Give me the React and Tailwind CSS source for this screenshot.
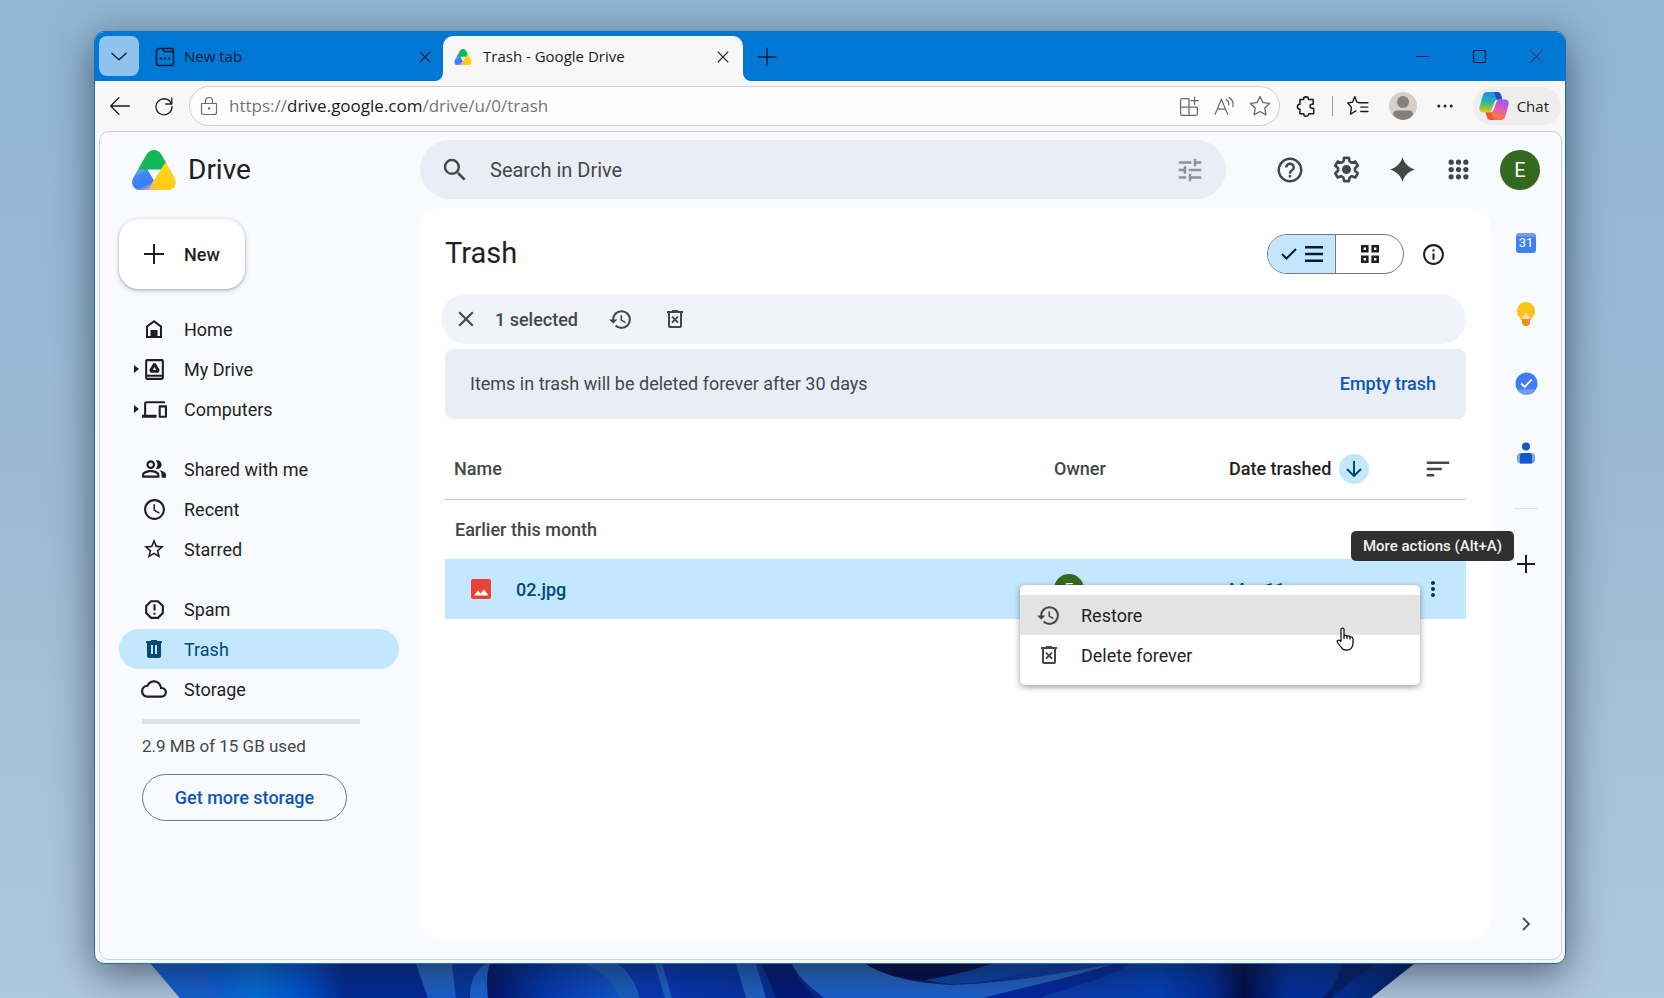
import { useState } from 'react';
import {
    MdAccessTime, MdClose, MdCloudQueue, MdHelpOutline, MdInfoOutline, MdMoreVert,
    MdOutlinePeopleAlt, MdRestore, MdSearch, MdSort, MdStarBorder, MdTune,
} from 'react-icons/md';

const DriveLogo = ({ className, id }) => (
    <svg viewBox="0 0 44 40" className={className} aria-hidden="true">
        <defs>
            <clipPath id={`${id}-clip`}>
                <path d="M14.6 4.6C16.3 1.6 18.8 0 22 0s5.700 1.600 7.400 4.600L42.600 27.500C46.200 33.800 42 40 35.800 40H8.200C2 40-2.200 33.800 1.400 27.500Z" />
            </clipPath>
            <linearGradient id={`${id}-blue`} x1="0.2" y1="0" x2="0.7" y2="1">
                <stop offset="0" stopColor="#6fb7ec" />
                <stop offset="0.3" stopColor="#3f86f7" />
                <stop offset="0.75" stopColor="#3b7df5" />
                <stop offset="1" stopColor="#b9a8e8" />
            </linearGradient>
            <linearGradient id={`${id}-yellow`} x1="0" y1="1" x2="0.8" y2="0.2">
                <stop offset="0" stopColor="#fdb45a" />
                <stop offset="0.35" stopColor="#ffcb14" />
                <stop offset="1" stopColor="#fdd51c" />
            </linearGradient>
        </defs>
        <g clipPath={`url(#${id}-clip)`}>
            <path d="M0 0H44V4L28.700 20H0Z" fill="#12b75b" />
            <path d="M0 19.500H15.500L22 30L17 40H0Z" fill={`url(#${id}-blue)`} />
            <path d="M33.500 12.500L28.700 19.500L22 30L16.500 40H44V12Z" fill={`url(#${id}-yellow)`} />
            <path d="M15.500 19.500H28.700L22 30.200Z" fill="#f8fafd" />
        </g>
    </svg>
);

const CopilotLogo = () => (
    <svg viewBox="0 0 30 28" className="w-[30px] h-7" aria-hidden="true">
        <defs>
            <linearGradient id="cp-a" x1="0.4" y1="0" x2="0.3" y2="1">
                <stop offset="0" stopColor="#1d8ff0" />
                <stop offset="0.45" stopColor="#22b4b4" />
                <stop offset="0.75" stopColor="#86c440" />
                <stop offset="1" stopColor="#f2c51d" />
            </linearGradient>
            <linearGradient id="cp-b" x1="0.7" y1="0" x2="0.3" y2="1">
                <stop offset="0" stopColor="#9b59e8" />
                <stop offset="0.45" stopColor="#e85ab5" />
                <stop offset="0.8" stopColor="#fb7a4a" />
                <stop offset="1" stopColor="#f9603a" />
            </linearGradient>
        </defs>
        <path d="M8 0H18C20 0 21.500 1.300 22 3L23.300 7.500H19C17 7.500 16 8.500 15.300 10.500L12.600 18C12 19.700 11 20.500 9 20.500H4C1.200 20.500-.3 18 .5 15L3.600 4C4.400 1.300 5.700 0 8 0Z" fill="url(#cp-a)" />
        <path d="M15 0H18C20 0 21.500 1.300 22 3L23.300 7.500H17.500Z" fill="#1f4bd0" />
        <path d="M22 28H12C10 28 8.500 26.700 8 25L6.700 20.500H11C13 20.500 14 19.500 14.700 17.500L17.400 10C18 8.300 19 7.500 21 7.500H26C28.800 7.500 30.300 10 29.500 13L26.400 24C25.600 26.700 24.300 28 22 28Z" fill="url(#cp-b)" />
        <path d="M15 28H12C10 28 8.500 26.700 8 25L6.700 20.500H12.500Z" fill="#f0552b" />
    </svg>
);

const Thin = ({ children, className = 'size-5', width = 1.2 }) => (
    <svg viewBox="0 0 20 20" className={className} fill="none" stroke="currentColor" strokeWidth={width} strokeLinecap="round" strokeLinejoin="round" aria-hidden="true">
        {children}
    </svg>
);

const Solid = ({ children, className = 'size-6' }) => (
    <svg viewBox="0 0 24 24" className={className} fill="currentColor" fillRule="evenodd" aria-hidden="true">
        {children}
    </svg>
);

const HomeIcon = () => <Solid><path d="M12 3L4 9v12h16V9L12 3zm6 16h-2.500v-6h-7v6H6v-9l6-4.500L18 10v9z" /><path d="M9 13h6v7H9z" /></Solid>;
const MyDriveIcon = () => (
    <Solid className="size-[25px]">
        <path d="M19 2H5a2 2 0 0 0-2 2v16a2 2 0 0 0 2 2h14a2 2 0 0 0 2-2V4a2 2 0 0 0-2-2zm0 18H5v-1h14v1zm0-3H5V4h14v13z" />
        <path d="M13.200 6h-2.400L7 12.500 8.200 15h7.600l1.200-2.500L13.200 6zm-2.800 6.500L12 9.700l1.600 2.800h-3.200z" />
    </Solid>
);
const ComputersIcon = () => <Solid className="size-[25px]"><path d="M4 6h18V4H4a2 2 0 0 0-2 2v11H0v3h14v-3H4V6zm19 2h-6a1 1 0 0 0-1 1v10a1 1 0 0 0 1 1h6a1 1 0 0 0 1-1V9a1 1 0 0 0-1-1zm-1 10h-4v-8h4v8z" /></Solid>;
const SpamIcon = () => <Solid className="size-[25px]"><path d="M15.730 3H8.270L3 8.270v7.460L8.270 21h7.460L21 15.730V8.270L15.730 3zM19 14.900L14.900 19H9.100L5 14.900V9.100L9.100 5h5.800L19 9.100v5.800zM11 7h2v6h-2zM11 15h2v2h-2z" /></Solid>;
const TrashIcon = () => <Solid><path d="M15 4V3H9v1H4v2h1v13c0 1.100.9 2 2 2h10c1.100 0 2-.9 2-2V6h1V4h-5zM9 8h2v9H9V8zm4 0h2v9h-2V8z" /></Solid>;
const DeleteForeverIcon = () => (
    <Solid>
        <path d="M15 4V3H9v1H4v2h1v13c0 1.100.9 2 2 2h10c1.100 0 2-.9 2-2V6h1V4h-5zm2 15H7V6h10v13z" />
        <path d="M9.600 16.300L12 13.900l2.400 2.400 1.300-1.300-2.400-2.400 2.400-2.400-1.300-1.300L12 11.300 9.600 8.900l-1.300 1.300 2.400 2.400L8.300 15z" />
    </Solid>
);
const GearIcon = () => (
    <svg viewBox="0 0 24 24" className="size-[31px]" aria-hidden="true">
        <path fill="none" stroke="currentColor" strokeWidth="2" strokeLinejoin="round" d="M10.100 3h3.800l.5 2.800 1.700 1 2.700-1 1.900 3.300-2.200 1.900v2l2.200 1.900-1.900 3.300-2.700-1-1.700 1-.5 2.800h-3.800l-.5-2.800-1.700-1-2.700 1-1.900-3.300 2.200-1.900v-2L3.300 9.100l1.900-3.300 2.700 1 1.700-1z" />
        <circle cx="12" cy="12" r="3.500" fill="currentColor" />
    </svg>
);

const NAV = [
    [
        { label: 'Home', icon: <HomeIcon /> },
        { label: 'My Drive', icon: <MyDriveIcon />, expandable: true },
        { label: 'Computers', icon: <ComputersIcon />, expandable: true },
    ],
    [
        { label: 'Shared with me', icon: <MdOutlinePeopleAlt className="size-[26px]" /> },
        { label: 'Recent', icon: <MdAccessTime className="size-[25px]" /> },
        { label: 'Starred', icon: <MdStarBorder className="size-6" /> },
    ],
    [
        { label: 'Spam', icon: <SpamIcon /> },
        { label: 'Trash', icon: <TrashIcon /> },
        { label: 'Storage', icon: <MdCloudQueue className="size-[26px]" /> },
    ],
];

function Wallpaper() {
    return (
        <svg viewBox="0 0 1664 60" preserveAspectRatio="none" className="absolute inset-x-0 bottom-0 w-full h-[60px]" aria-hidden="true">
            <defs>
                <linearGradient id="bloom" gradientUnits="userSpaceOnUse" x1="150" y1="0" x2="1414" y2="0">
                    <stop offset="0" stopColor="#1a62d0" />
                    <stop offset="0.05" stopColor="#0b5fd8" />
                    <stop offset="0.085" stopColor="#0570dc" />
                    <stop offset="0.12" stopColor="#0054d4" />
                    <stop offset="0.155" stopColor="#002a98" />
                    <stop offset="0.21" stopColor="#022a98" />
                    <stop offset="0.25" stopColor="#0638a8" />
                    <stop offset="0.4" stopColor="#0538b8" />
                    <stop offset="0.52" stopColor="#052c94" />
                    <stop offset="0.58" stopColor="#021058" />
                    <stop offset="0.7" stopColor="#0a3aa8" />
                    <stop offset="0.8" stopColor="#0340b8" />
                    <stop offset="0.84" stopColor="#022c98" />
                    <stop offset="0.865" stopColor="#010c48" />
                    <stop offset="0.9" stopColor="#0230a0" />
                    <stop offset="0.94" stopColor="#013098" />
                    <stop offset="1" stopColor="#011e68" />
                </linearGradient>
                <linearGradient id="petal" x1="0" y1="0" x2="1" y2="0">
                    <stop offset="0" stopColor="#020850" />
                    <stop offset="0.5" stopColor="#0438b0" />
                    <stop offset="1" stopColor="#1058d0" />
                </linearGradient>
                <linearGradient id="sheen" x1="0" y1="0" x2="0" y2="1">
                    <stop offset="0" stopColor="#2a6cbc" />
                    <stop offset="1" stopColor="#1a5fd2" />
                </linearGradient>
            </defs>
            <path d="M131 0H1440L1414 26L1371 60H180L151 26Z" fill="url(#bloom)" />
            <path d="M151 26L180 60H224L192 26Z" fill="#1560d0" />
            <path d="M416 26H452L456 60H428Z" fill="url(#sheen)" />
            <path d="M470 60C470 44 474 32 486 26H585C605 34 614 48 620 60Z" fill="url(#petal)" />
            <path d="M470 60C470 44 474 32 486 26H490C486 36 487 48 488 60Z" fill="#1d66d4" />
            <path d="M585 26C605 34 614 48 620 60H640C636 44 628 33 618 26Z" fill="#1b60c0" />
            <path d="M618 26C628 33 636 44 640 60H656C652 44 650 34 646 26Z" fill="#0838b4" />
            <path d="M655 26H662L672 60H665Z" fill="#1d62cc" />
            <path d="M736 26H756L766 60H746Z" fill="#2062c4" />
            <path d="M762 26H792C800 44 808 52 816 60H776Z" fill="#021878" />
            <path d="M792 26H866C880 34 900 44 950 47C1000 46 1060 36 1112 26H1130C1070 40 1020 50 984 60H824C812 50 800 42 792 26Z" fill="url(#sheen)" />
            <path d="M866 26H998C984 36 970 42 948 43C910 44 880 36 866 26Z" fill="#020b48" />
            <path d="M924 42C950 38 974 32 990 26H1050C1020 38 984 46 950 46Z" fill="#0a44a8" />
            <path d="M984 60C1020 50 1070 40 1112 26H1130C1110 40 1060 52 1040 60Z" fill="#0428a0" />
            <path d="M1342 26H1376C1356 40 1344 50 1330 60H1322C1334 50 1338 40 1342 26Z" fill="#03206c" />
        </svg>
    );
}

function TitleBar() {
    return (
        <div className="flex h-[49px] bg-[#0078d4] pl-1 text-[#0b1a36]">
            <button aria-label="Tab actions" className="mt-1 flex size-10 items-center justify-center rounded-lg bg-[#8fc3ee]">
                <Thin className="size-[22px]"><path d="M3.500 7.500L10 13.500L16.500 7.500" /></Thin>
            </button>
            <div className="flex w-[304px] items-center pl-4 pr-2.5 text-[15px]">
                <Thin className="size-[20px]" width={1.5}>
                    <path d="M1.500 4a2.500 2.500 0 0 1 2.500-2.500h3.500L9 4.500h7a2.500 2.500 0 0 1 2.500 2.500v9a2.500 2.500 0 0 1-2.500 2.500H4A2.500 2.500 0 0 1 1.500 16zM8 1.500h8a2.500 2.500 0 0 1 2.500 2.500v3" />
                    <path d="M5.500 11.500h.8M9.600 11.500h.8M13.700 11.500h.8" strokeWidth="1.800" />
                </Thin>
                <span className="ml-[9px] flex-1">New tab</span>
                <button aria-label="Close New tab"><Thin className="size-4" width={1.5}><path d="M4 4l12 12M16 4L4 16" /></Thin></button>
            </div>
            <div className="relative mt-1 flex w-[300px] items-center rounded-t-[10px] bg-[#f7f7f7] pb-1 pl-[11px] pr-3 text-[15px] text-[#1b1b1b]">
                <svg viewBox="0 0 8 8" className="absolute -left-2 bottom-0 size-2" aria-hidden="true"><path d="M8 0V8H0A8 8 0 0 0 8 0" fill="#f7f7f7" /></svg>
                <svg viewBox="0 0 8 8" className="absolute -right-2 bottom-0 size-2" aria-hidden="true"><path d="M0 0V8H8A8 8 0 0 1 0 0" fill="#f7f7f7" /></svg>
                <DriveLogo className="h-4 w-[18px]" id="fav" />
                <span className="ml-[11px] flex-1">Trash - Google Drive</span>
                <button aria-label="Close Trash tab"><Thin className="size-4" width={1.5}><path d="M4 4l12 12M16 4L4 16" /></Thin></button>
            </div>
            <button aria-label="New tab" className="flex w-12 items-center justify-center">
                <Thin className="size-[22px]"><path d="M10 2v16M2 10h16" /></Thin>
            </button>
            <div className="flex-1" />
            <button aria-label="Minimize" className="flex w-[57px] items-center justify-center"><Thin className="size-[15px]"><path d="M2 10h16" /></Thin></button>
            <button aria-label="Maximize" className="flex w-[57px] items-center justify-center"><Thin className="size-[15px]" width={1.6}><rect x="2" y="2" width="16" height="16" rx="1.500" /></Thin></button>
            <button aria-label="Close" className="flex w-[57px] items-center justify-center"><Thin className="size-[15px]"><path d="M2 2l16 16M18 2L2 18" /></Thin></button>
        </div>
    );
}

function Toolbar() {
    return (
        <div className="flex h-[50px] items-center bg-[#f7f7f7] pl-0.5 pr-1 text-[#1f1f1f]">
            <button aria-label="Back" className="flex w-[45px] justify-center"><Thin className="size-[22px]"><path d="M18.500 10h-17M9 2.500L1.500 10L9 17.500" /></Thin></button>
            <button aria-label="Refresh" className="flex w-11 justify-center"><Thin className="size-5" width={1.3}><path d="M17.500 8A8 8 0 1 0 18 10.500M17.800 2v6h-6" /></Thin></button>
            <label className="ml-[3px] flex h-10 flex-1 items-center rounded-full border border-[#d0d0d0] bg-[#fdfdfd] pl-[9px] pr-2 text-[#6b6b6b]">
                <Thin className="size-5"><path d="M2.500 7.500h15v9a2 2 0 0 1-2 2h-11a2 2 0 0 1-2-2zM6.500 7.500V5a3.500 3.500 0 0 1 7 0v2.500" /><circle cx="10" cy="12.500" r="0.600" fill="currentColor" /></Thin>
                <span className="ml-2.5 flex-1 text-[17px] text-[#767676]">https://<span className="text-[#1b1b1b]">drive.google.com</span>/drive/u/0/trash</span>
                <span className="flex items-center gap-[14px]">
                    <Thin className="size-[21px]"><path d="M9 2.500H3a1.500 1.500 0 0 0-1.500 1.500v13A1.500 1.500 0 0 0 3 18.500h13a1.500 1.500 0 0 0 1.500-1.500v-6.500h-16M9.500 2.500v16M14.800 1v7M11.300 4.500h7" /></Thin>
                    <Thin className="size-[21px]"><path d="M1 17.500L7 3l6 14.500M3 12.500h8M11.500 3.500q3 1.500 2.500 5M14.500 1.500q4.500 2.500 3.500 8.500" /></Thin>
                    <Thin className="size-[22px]"><path d="M10 1.300l2.700 5.600 6.100.8-4.500 4.200 1.100 6.100L10 15l-5.400 3 1.100-6.100L1.200 7.700l6.100-.8z" /></Thin>
                </span>
            </label>
            <button aria-label="Extensions" className="flex w-[52px] justify-center">
                <Thin className="size-[22px]" width={1.4}><path d="M4.500 4h3.200a2.300 2.300 0 0 1 4.600 0h4.200v4.500h-1a1.800 1.800 0 0 0 0 3.600h1.500V17h-4.500a2.300 2.300 0 0 1-4.600 0H4.500v-4a2.300 2.300 0 0 1 0-4.600z" /></Thin>
            </button>
            <span className="h-5 w-px bg-[#9a9a9a]" />
            <button aria-label="Favorites" className="flex w-[50px] justify-center">
                <Thin className="size-[22px]" width={1.3}><path d="M12 7L9 6.500 7.200 1.500 5 6.500 0.700 7.200 4 11 3.200 17.500 8 14.500M12 7h7M12.500 11h6.500M12.500 15h6.500M12 7L10.500 7" /></Thin>
            </button>
            <button aria-label="Profile" className="ml-1.5">
                <svg viewBox="0 0 28 28" className="size-7" aria-hidden="true"><circle cx="14" cy="14" r="14" fill="#d4d0cd" /><circle cx="14" cy="10" r="6" fill="#857f7b" /><path d="M4 22.500a4 4 0 0 1 4-4h12a4 4 0 0 1 4 4A13 13 0 0 1 14 28A13 13 0 0 1 4 22.500" fill="#857f7b" /></svg>
            </button>
            <button aria-label="Settings and more" className="flex w-14 justify-center">
                <svg viewBox="0 0 20 20" className="size-5" fill="currentColor" aria-hidden="true"><circle cx="3.800" cy="10" r="1.500" /><circle cx="10" cy="10" r="1.500" /><circle cx="16.200" cy="10" r="1.500" /></svg>
            </button>
            <button className="flex h-[38px] items-center gap-2 rounded-full bg-[#eeeeee] pl-1.5 pr-3 text-[15px]"><CopilotLogo />Chat</button>
        </div>
    );
}

function Header() {
    return (
        <header className="flex h-[76px] items-center pb-px">
            <div className="flex w-80 items-center pl-8">
                <DriveLogo className="h-10 w-11" id="brand" />
                <span className="ml-3 text-[28px] leading-8 text-[#1f1f1f]">Drive</span>
            </div>
            <div className="flex h-[59px] flex-1 items-center rounded-full bg-[#e9eef6] pl-5 pr-[21px]">
                <MdSearch className="size-[30px] text-[#444746]" />
                <input aria-label="Search in Drive" placeholder="Search in Drive" className="ml-5 flex-1 bg-transparent text-xl text-[#444746] outline-none placeholder:text-[#444746]" />
                <button aria-label="Advanced search"><MdTune className="size-[30px] text-[#8e9297]" /></button>
            </div>
            <div className="ml-9 flex items-center pr-[21px] text-[#444746]">
                <button aria-label="Support" className="flex w-14 justify-center"><MdHelpOutline className="size-[30px]" /></button>
                <button aria-label="Settings" className="flex w-14 justify-center"><GearIcon /></button>
                <button aria-label="Gemini" className="flex w-14 justify-center">
                    <svg viewBox="0 0 24 24" className="size-[25px]" fill="currentColor" aria-hidden="true"><path d="M12 0C13.200 5.500 18.500 10.800 24 12C18.500 13.200 13.200 18.500 12 24C10.800 18.500 5.500 13.200 0 12C5.500 10.800 10.800 5.500 12 0" /></svg>
                </button>
                <button aria-label="Google apps" className="flex w-14 justify-center">
                    <svg viewBox="0 0 20 20" className="size-[21px]" fill="currentColor" aria-hidden="true">
                        {[3, 10, 17].map(y => [3, 10, 17].map(x => <circle key={`${x}-${y}`} cx={x} cy={y} r="2.500" />))}
                    </svg>
                </button>
                <button aria-label="Account" className="ml-3.5 size-10 rounded-full bg-[#33691e] text-xl text-white">E</button>
            </div>
        </header>
    );
}

function Sidebar({ current, onSelect }) {
    return (
        <aside className="w-80 shrink-0 pl-[19px] pr-[21px] pt-[11px] text-[#1f1f1f]">
            <button className="flex h-[70px] w-[126px] items-center rounded-[20px] bg-white pl-[25px] text-[18px] font-medium shadow-[0_1px_3px_rgba(60,64,67,0.35),0_2px_6px_rgba(60,64,67,0.15)]">
                <svg viewBox="0 0 20 20" className="size-5" fill="currentColor" aria-hidden="true"><path d="M9 0h2v9h9v2h-9v9H9v-9H0V9h9z" /></svg>
                <span className="ml-5">New</span>
            </button>
            <nav className="mt-5 flex flex-col gap-5">
                {NAV.map((group, i) => (
                    <div key={i}>
                        {group.map(item => (
                            <a key={item.label} href="#" onClick={(e) => { e.preventDefault(); onSelect(item.label); }}
                                className={`flex h-10 items-center rounded-full pl-3 text-[18px] ${current === item.label ? 'bg-[#c2e7ff] text-[#004a77]' : ''}`}>
                                <span className="flex w-2.5 shrink-0 justify-center">
                                    {item.expandable && <svg viewBox="0 0 5 8" className="h-2 w-[5px]" fill="currentColor" aria-hidden="true"><path d="M0 0L5 4L0 8Z" /></svg>}
                                </span>
                                <span className="flex w-[26px] shrink-0 justify-center">{item.icon}</span>
                                <span className="ml-[17px]">{item.label}</span>
                            </a>
                        ))}
                    </div>
                ))}
            </nav>
            <div className="pl-[23px]">
                <div className="mt-2.5 h-[5px] w-[218px] bg-[#dfe1e4]" />
                <p className="mt-2.5 text-[17px] leading-6 text-[#444746]">2.9 MB of 15 GB used</p>
                <button className="mt-4 h-[47px] w-[205px] rounded-full border border-[#747775] text-[18px] font-medium text-[#0f57b4]">Get more storage</button>
            </div>
        </aside>
    );
}

function ContextMenu() {
    return (
        <div role="menu" className="absolute right-[46px] top-[26px] z-10 w-[400px] rounded-[5px] bg-white pb-2.5 pt-2.5 text-[18px] text-[#1f1f1f] shadow-[0_2px_6px_rgba(0,0,0,0.4)]">
            <button role="menuitem" className="flex h-10 w-full items-center bg-[#e3e3e3] pl-4">
                <MdRestore className="size-[25px] text-[#444746]" /><span className="ml-5">Restore</span>
            </button>
            <button role="menuitem" className="flex h-10 w-full items-center pl-4 text-left">
                <span className="flex w-[25px] justify-center text-[#444746]"><DeleteForeverIcon /></span><span className="ml-5">Delete forever</span>
            </button>
            <svg viewBox="0 0 18 24" className="absolute left-[316px] top-[42px] h-6 w-[18px]" aria-hidden="true">
                <path d="M5 14V2.500a1.500 1.500 0 0 1 3 0V9q1.500-1.500 3 .3 1.700-1 3 .7 3-.3 3 2V17q-1 6-6 6.200-4 .3-6-3.200L1.500 15.500q-1-2 1-2.500Q4 13 5 15M8 9v3M11 9.500V12M14 10v2.500" fill="#fff" stroke="#000" strokeWidth="1.200" strokeLinejoin="round" />
            </svg>
        </div>
    );
}

function FileTable() {
    return (
        <table className="mt-5 w-full table-fixed text-left text-[18px] text-[#444746]">
            <thead>
                <tr className="h-[60px] border-b border-[#c4c7c5]">
                    <th className="pl-[9px] font-medium">Name</th>
                    <th className="w-[175px] font-medium">Owner</th>
                    <th className="w-[170px] font-medium text-[#1f1f1f]">
                        <button className="flex items-center gap-2">
                            Date trashed
                            <span className="flex size-[30px] items-center justify-center rounded-full bg-[#c2e7ff] text-[#004a77]">
                                <svg viewBox="0 0 16 16" className="size-4" fill="none" stroke="currentColor" strokeWidth="2" aria-hidden="true"><path d="M8 0v15M1 8l7 7 7-7" /></svg>
                            </span>
                        </button>
                    </th>
                    <th className="w-[67px]"><button aria-label="Sort options" className="ml-6 flex"><MdSort className="size-[30px]" /></button></th>
                </tr>
            </thead>
            <tbody>
                <tr className="h-[60px]"><th colSpan={4} className="pl-2.5 font-medium">Earlier this month</th></tr>
                <tr className="relative h-[60px] bg-[#c2e7ff] text-[#004a77]">
                    <td className="font-medium">
                        <span className="flex items-center pl-[26px]">
                            <svg viewBox="0 0 20 20" className="size-5" aria-hidden="true"><rect width="20" height="20" rx="2" fill="#ea4335" /><path d="M3 16.500l4-5 2.500 3 3.500-4 4.500 6z" fill="#fff" /></svg>
                            <span className="ml-[25px]">02.jpg</span>
                        </span>
                    </td>
                    <td><span className="flex size-[30px] items-center justify-center rounded-full bg-[#33691e] text-[15px] text-white">E</span></td>
                    <td>Mar 11</td>
                    <td>
                        <button aria-label="More actions" className="ml-[22px] flex text-[#00344f]"><MdMoreVert className="size-6" /></button>
                        <span role="tooltip" className="absolute -right-12 -top-7 z-20 flex h-[30px] items-center whitespace-nowrap rounded-[5px] bg-[#303030] px-3 text-[15px] font-medium text-[#f2f2f2]">More actions (Alt+A)</span>
                        <ContextMenu />
                    </td>
                </tr>
            </tbody>
        </table>
    );
}

function TrashPanel() {
    return (
        <main className="flex-1 rounded-[20px] bg-white pl-[25px] pr-[25px] pt-[26px]">
            <div className="flex h-10 items-center">
                <h1 className="flex-1 text-[29px] text-[#1f1f1f]">Trash</h1>
                <div className="flex h-10 w-[137px] overflow-hidden rounded-full border border-[#747775] text-[#1f1f1f]">
                    <button aria-label="List layout" className="flex flex-1 items-center justify-center gap-2 bg-[#c2e7ff] text-[#001d35]">
                        <svg viewBox="0 0 16 12" className="h-3 w-4" fill="none" stroke="currentColor" strokeWidth="2" aria-hidden="true"><path d="M1 6l4.500 4.500L15 1" /></svg>
                        <svg viewBox="0 0 18 16" className="h-4 w-[18px]" fill="currentColor" aria-hidden="true"><path d="M0 0h18v2.500H0zM0 6.800h18v2.500H0zM0 13.500h18V16H0z" /></svg>
                    </button>
                    <button aria-label="Grid layout" className="flex flex-1 items-center justify-center border-l border-[#747775]">
                        <svg viewBox="0 0 18 18" className="size-[18px]" fill="none" stroke="currentColor" strokeWidth="2.600" aria-hidden="true"><path d="M1.300 1.300h5v5h-5zM11.700 1.300h5v5h-5zM1.300 11.700h5v5h-5zM11.700 11.700h5v5h-5z" /></svg>
                    </button>
                </div>
                <button aria-label="View details" className="ml-[17px] mr-5 text-[#1f1f1f]"><MdInfoOutline className="size-[25px]" /></button>
            </div>
            <div className="-ml-1 mt-5 flex h-[50px] items-center rounded-full bg-[#f0f4f9] pl-3 text-[#444746]">
                <button aria-label="Clear selection"><MdClose className="size-[26px]" /></button>
                <span className="ml-4 w-[83px] whitespace-nowrap text-[18px] font-medium">1 selected</span>
                <button aria-label="Restore from trash" className="ml-[30px]"><MdRestore className="size-[25px]" /></button>
                <button aria-label="Delete forever" className="ml-[30px]"><DeleteForeverIcon /></button>
            </div>
            <div className="mt-[5px] flex h-[70px] items-center justify-between rounded-lg bg-[#e9eef6] pb-px pl-[25px] pr-[30px] text-[18px]">
                <p className="text-[#444746]">Items in trash will be deleted forever after 30 days</p>
                <button className="font-medium text-[#0f57b4]">Empty trash</button>
            </div>
            <FileTable />
        </main>
    );
}

function AppRail() {
    return (
        <aside className="flex w-[70px] shrink-0 flex-col items-center">
            <button aria-label="Calendar" className="flex h-[70px] items-center">
                <span className="flex size-5 items-center justify-center rounded-[3px] bg-gradient-to-b from-[#7b9cf0] from-15% to-[#3f83f2] to-20% text-[13px] leading-5 text-white">31</span>
            </button>
            <button aria-label="Keep" className="flex h-[70px] items-center">
                <svg viewBox="0 0 20 25" className="h-[25px] w-5" aria-hidden="true">
                    <path d="M10 1a9 9 0 0 1 5.500 16.100V19h-11v-1.900A9 9 0 0 1 10 1" fill="#fbc318" />
                    <path d="M10 12l3.500 4v2h-7v-2z" fill="#fcdcb4" />
                    <path d="M6 18h8v3a4 4 0 0 1-8 0z" fill="#ef8d22" />
                </svg>
            </button>
            <button aria-label="Tasks" className="flex h-[70px] items-center">
                <svg viewBox="0 0 24 24" className="size-[23px]" aria-hidden="true"><circle cx="12" cy="12" r="11.500" fill="#3f7df3" /><path d="M2 18a11.500 11.500 0 0 0 20 0z" fill="#759bf5" /><path d="M6.500 12l3.500 3.500L17.500 8" fill="none" stroke="#fff" strokeWidth="2" /></svg>
            </button>
            <button aria-label="Contacts" className="flex h-[70px] items-center">
                <svg viewBox="0 0 18 22" className="h-[22px] w-[18px]" aria-hidden="true"><circle cx="9" cy="4.500" r="4" fill="#1259c7" /><rect y="11" width="18" height="10.500" rx="4" fill="#7aa2f3" /><path d="M3 14a3 3 0 0 1 3-3h6a3 3 0 0 1 3 3v7.500H3z" fill="#1259c7" /></svg>
            </button>
            <div className="mt-5 h-px w-6 bg-[#dde1e6]" />
            <button aria-label="Get add-ons" className="mt-5 flex h-[70px] items-center text-[#1f1f1f]">
                <svg viewBox="0 0 18 18" className="size-[18px]" fill="currentColor" aria-hidden="true"><path d="M8 0h2v8h8v2h-8v8H8v-8H0V8h8z" /></svg>
            </button>
            <button aria-label="Hide side panel" className="mb-2 mt-auto text-[#444746]">
                <svg viewBox="0 0 8 14" className="h-3.5 w-2" fill="none" stroke="currentColor" strokeWidth="1.800" aria-hidden="true"><path d="M1 1l6 6-6 6" /></svg>
            </button>
        </aside>
    );
}

export default function App() {
    const [current, setCurrent] = useState('Trash');

    return (
        <div className="relative flex min-h-screen flex-col overflow-hidden bg-gradient-to-b from-[#8fb6d3] via-[#9dbad4] to-[#b0c8dd] pb-[34px] pl-[94px] pr-[98px] pt-[31px]">
            <Wallpaper />
            <div className="relative flex flex-1 flex-col rounded-[10px] border border-[#1a6fb8] bg-[#f7f7f7] shadow-[0_10px_40px_rgba(20,30,50,0.6)]">
                <div className="flex flex-1 flex-col overflow-hidden rounded-[9px]">
                    <div className="font-['Open_Sans',sans-serif]">
                        <TitleBar />
                        <Toolbar />
                    </div>
                    <div className="mb-[3px] ml-1 mr-[3px] flex flex-1 flex-col rounded-[10px] border border-[#cfd0d3] bg-[#f8fafd] font-[Roboto,sans-serif]">
                        <Header />
                        <div className="flex flex-1 pb-5">
                            <Sidebar current={current} onSelect={setCurrent} />
                            <TrashPanel />
                            <AppRail />
                        </div>
                    </div>
                </div>
            </div>
        </div>
    );
}
